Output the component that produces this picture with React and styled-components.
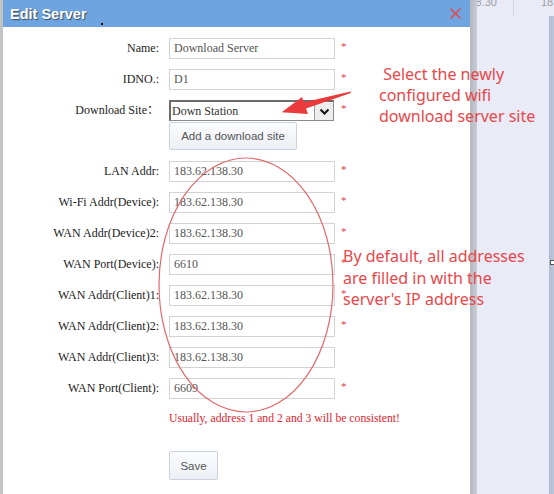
import React from "react";
import styled, { createGlobalStyle } from "styled-components";

const GlobalStyle = createGlobalStyle`
  html, body {
    margin: 0;
    padding: 0;
    background: #e9ecf7;
  }
  * {
    box-sizing: border-box;
  }
`;

const Page = styled.div`
  position: relative;
  width: 554px;
  height: 494px;
  overflow: hidden;
  display: flex;
  flex-direction: column;
  background: #e9ecf7;
  font-family: "Liberation Serif", "Noto Sans CJK SC", serif;
`;

/* table of the page behind the dialog */
const BgHeader = styled.div`
  display: flex;
  justify-content: flex-end;
  height: 16px;
  font-family: "Liberation Sans", sans-serif;
  font-size: 11px;
  color: #9a9ca3;
`;

const BgCell = styled.div`
  width: ${(p) => p.$width}px;
  height: 16px;
  overflow: hidden;
  white-space: nowrap;
  line-height: 4px;
  text-align: ${(p) => p.$align};
  padding: 0 ${(p) => p.$padRight}px 0 ${(p) => p.$padLeft}px;
  border-right: ${(p) => (p.$divider ? "1px solid #d3d7e2" : "none")};
`;

const BgBody = styled.div`
  flex: 1;
  display: flex;
  justify-content: flex-end;
`;

const EdgeStrip = styled.div`
  width: 5px;
  background: linear-gradient(to right, #aebad1, #bcc6da);
  padding-top: 244px;
`;

const EdgeMark = styled.div`
  width: 4px;
  height: 5px;
  margin-left: 1px;
  border: 1px solid #555;
  border-right: none;
  background: #fff;
`;

const Dialog = styled.div`
  position: absolute;
  left: 0;
  top: 0;
  width: 470px;
  height: 494px;
  background: #fff;
  border-left: 3px solid #c4c4c4;

  &::after {
    content: "";
    position: absolute;
    top: 0;
    right: -7px;
    width: 7px;
    height: 100%;
    background: linear-gradient(to right, #b3b7be, #c9ccd4);
  }
`;

const TitleBar = styled.div`
  height: 27px;
  background: #6ea5e0;
  display: flex;
  align-items: center;
  justify-content: space-between;
  padding: 0 8px 0 7px;
`;

const Title = styled.span`
  font-family: "Liberation Sans", sans-serif;
  font-weight: bold;
  font-size: 14.5px;
  color: #fff;
  text-shadow: 1px 1px 1px #3a4a5e;
`;

const CloseButton = styled.button`
  width: 13px;
  height: 13px;
  padding: 0;
  border: none;
  background: none;
  display: flex;
  cursor: pointer;
`;

const Body = styled.div`
  position: relative;
  padding-top: 11px;
`;

const Dot = styled.span`
  position: absolute;
  left: 98px;
  top: -4px;
  width: 2px;
  height: 2px;
  background: #111;
`;

const Row = styled.div`
  display: grid;
  grid-template-columns: 156px 166px auto;
  column-gap: 10px;
  margin-bottom: ${(p) => (p.$tight ? 11 : 10)}px;
`;

const Label = styled.label`
  text-align: right;
  font-size: 12px;
  line-height: 21px;
  height: 21px;
  color: #222;
  white-space: nowrap;
`;

const Input = styled.input`
  width: 166px;
  height: 21px;
  border: 1px solid #d3d3d3;
  padding: 0 4px;
  font-family: "Liberation Serif", serif;
  font-size: 12px;
  color: #555;
  outline: none;
  background: #fff;
`;

const Required = styled.span`
  color: #e23b3b;
  font-size: 11px;
  line-height: 21px;
  margin-left: -4px;
  position: relative;
  top: -2px;
`;

const Stack = styled.div`
  display: flex;
  flex-direction: column;
  gap: 1px;
`;

const SelectBox = styled.div`
  width: 165px;
  height: 21px;
  display: flex;
  align-items: stretch;
  border: 1px solid #8a8a8a;
  border-top: 2px solid #6b6b6b;
  border-left: 2px solid #6b6b6b;
  background: #fff;
`;

const Select = styled.select`
  flex: 1;
  appearance: none;
  border: none;
  outline: none;
  background: transparent;
  padding: 0 1px;
  font-family: "Liberation Serif", serif;
  font-size: 12px;
  color: #333;
`;

const Chevron = styled.span`
  width: 19px;
  display: flex;
  align-items: center;
  justify-content: center;
  border-left: 1px solid #9a9a9a;
  background: #ededed;
  margin: 1px 0 0;
`;

const Button = styled.button`
  height: ${(p) => p.$height}px;
  width: ${(p) => p.$width}px;
  border: 1px solid #c9d2de;
  border-radius: 2px;
  background: linear-gradient(to bottom, #fbfcfe, #eceff5);
  font-family: "Liberation Sans", sans-serif;
  font-size: 11.5px;
  color: #555;
  padding: 0;
  cursor: pointer;
`;

const Note = styled.div`
  padding-left: 166px;
  font-size: 11.7px;
  line-height: 20px;
  color: #e2232f;
`;

const Actions = styled.div`
  padding-left: 166px;
  margin-top: 22px;
`;

const Overlay = styled.svg`
  position: absolute;
  left: 0;
  top: 0;
  pointer-events: none;
`;

const Callout = styled.div`
  position: absolute;
  left: ${(p) => p.$left}px;
  top: ${(p) => p.$top}px;
  font-family: "Noto Sans", sans-serif;
  font-size: 16px;
  line-height: ${(p) => p.$lineHeight}px;
  color: #e8474a;
  white-space: pre;
  pointer-events: none;
`;

const fields = [
  { label: "LAN Addr:", value: "183.62.138.30", required: true },
  { label: "Wi-Fi Addr(Device):", value: "183.62.138.30", required: true },
  { label: "WAN Addr(Device)2:", value: "183.62.138.30", required: true },
  { label: "WAN Port(Device):", value: "6610", required: true },
  { label: "WAN Addr(Client)1:", value: "183.62.138.30", required: true },
  { label: "WAN Addr(Client)2:", value: "183.62.138.30", required: true },
  { label: "WAN Addr(Client)3:", value: "183.62.138.30", required: false },
  { label: "WAN Port(Client):", value: "6609", required: true },
];

const FieldRow = ({ label, value, required }) => (
  <Row>
    <Label>{label}</Label>
    <Input defaultValue={value} />
    {required ? <Required>*</Required> : <span />}
  </Row>
);

const App = () => {
  return (
    <>
      <GlobalStyle />
      <Page>
        <BgHeader>
          <BgCell $width={134} $align="right" $padRight={16} $padLeft={0} $divider>
            183.62.138.30
          </BgCell>
          <BgCell $width={40} $align="left" $padRight={0} $padLeft={27}>
            183.62.138.30
          </BgCell>
        </BgHeader>
        <BgBody>
          <EdgeStrip>
            <EdgeMark />
          </EdgeStrip>
        </BgBody>

        <Dialog>
          <TitleBar>
            <Title>Edit Server</Title>
            <CloseButton aria-label="close">
              <svg width="13" height="13" viewBox="0 0 13 13">
                <path d="M1.5 1.5 L11.5 11.5 M11.5 1.5 L1.5 11.5" stroke="#e0494a" strokeWidth="1.6" />
              </svg>
            </CloseButton>
          </TitleBar>

          <Body>
            <Dot />
            <FieldRow label="Name:" value="Download Server" required />
            <FieldRow label="IDNO.:" value="D1" required />
            <Row $tight>
              <Label>Download Site：</Label>
              <Stack>
                <SelectBox>
                  <Select defaultValue="down">
                    <option value="down">Down Station</option>
                  </Select>
                  <Chevron>
                    <svg width="11" height="8" viewBox="0 0 11 8">
                      <path d="M1.5 1.5 L5.5 5.5 L9.5 1.5" fill="none" stroke="#111" strokeWidth="2" />
                    </svg>
                  </Chevron>
                </SelectBox>
                <Button type="button" $width={128} $height={28}>
                  Add a download site
                </Button>
              </Stack>
              <Required>*</Required>
            </Row>

            {fields.map((f) => (
              <FieldRow key={f.label} {...f} />
            ))}

            <Note>Usually, address 1 and 2 and 3 will be consistent!</Note>
            <Actions>
              <Button type="button" $width={49} $height={29}>
                Save
              </Button>
            </Actions>
          </Body>
        </Dialog>

        <Overlay width="554" height="494" viewBox="0 0 554 494">
          <ellipse cx="246" cy="285" rx="87" ry="127" fill="none" stroke="#e26a6c" strokeWidth="1.2" />
          <polygon
            points="281.7,112.3 308,114 306,108.5 350.9,93.1 350.5,91.5 304,102.2 302,97"
            fill="#ea3a3c"
          />
        </Overlay>

        <Callout $left={379} $top={64} $lineHeight={21}>
          {" Select the newly\nconfigured wifi\ndownload server site"}
        </Callout>
        <Callout $left={343} $top={246} $lineHeight={21.5}>
          {"By default, all addresses\nare filled in with the\nserver's IP address"}
        </Callout>
      </Page>
    </>
  );
};

export default App;
